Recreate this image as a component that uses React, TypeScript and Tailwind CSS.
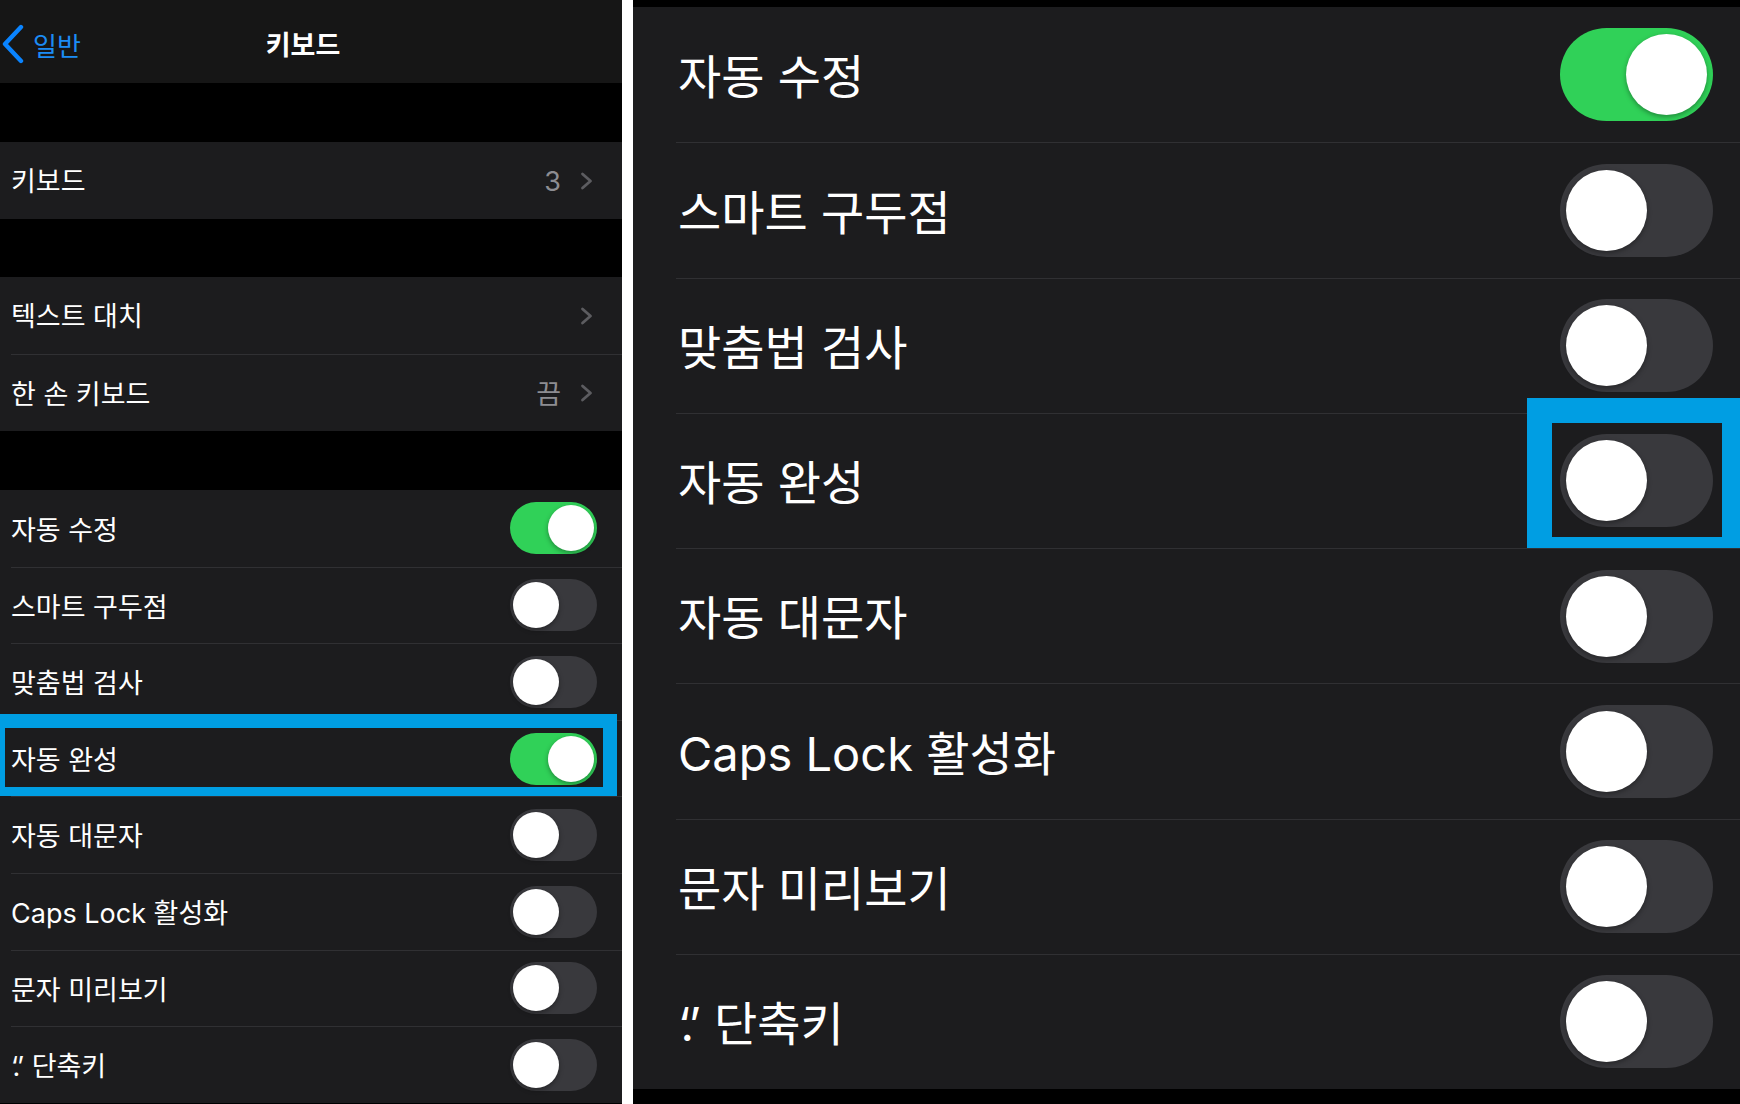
import React from 'react';

const font = { fontFamily: 'Inter, "Noto Sans CJK KR", "Noto Sans", sans-serif' };

interface ToggleProps {
  on: boolean;
  big?: boolean;
}

function Toggle({ on, big }: ToggleProps) {
  const track = big ? 'w-[153px] h-[93px] p-[6px]' : 'w-[87px] h-[52px] p-[3px]';
  const knob = big ? 'w-[81px] h-[81px]' : 'w-[46px] h-[46px]';
  return (
    <div
      className={`${track} rounded-full flex items-center shrink-0 ${
        on ? 'bg-[#30d158] justify-end' : 'bg-[#39393d] justify-start'
      }`}
    >
      <div className={`${knob} rounded-full bg-white shadow-[0_2px_5px_rgba(0,0,0,0.35)]`} />
    </div>
  );
}

function Chevron() {
  return (
    <svg width="13" height="18" viewBox="0 0 13 18" className="shrink-0">
      <path d="M2.5 2l8 7-8 7" fill="none" stroke="#5c5c60" strokeWidth="2.8" strokeLinecap="round" strokeLinejoin="round" />
    </svg>
  );
}

const toggles: { label: React.ReactNode; on: boolean; key: string }[] = [
  { key: 'a', label: '자동 수정', on: true },
  { key: 'b', label: '스마트 구두점', on: false },
  { key: 'c', label: '맞춤법 검사', on: false },
  { key: 'd', label: '자동 완성', on: true },
  { key: 'e', label: '자동 대문자', on: false },
  { key: 'f', label: 'Caps Lock 활성화', on: false },
  { key: 'g', label: '문자 미리보기', on: false },
  {
    key: 'h',
    label: (
      <>
        <span className="tracking-[-0.12em]">‘.</span>’ 단축키
      </>
    ),
    on: false,
  },
];

function LinkRow({ label, value, first }: { label: string; value?: string; first?: boolean }) {
  return (
    <div className="h-[77px] bg-[#1c1c1e] flex flex-col">
      {!first && <div className="h-px bg-[#303033] ml-[11px]" />}
      <div className="flex-1 flex items-center pl-[11px] pr-[29px]">
        <span className="flex-1 pt-[4px] text-[27px] text-white">{label}</span>
        {value && <span className="pt-[4px] text-[27px] text-[#8d8d92] mr-[19px]">{value}</span>}
        <Chevron />
      </div>
    </div>
  );
}

function LeftPanel() {
  return (
    <div className="w-[622px] shrink-0 flex flex-col bg-black">
      {/* nav bar */}
      <div className="h-[83px] bg-[#161616] grid grid-cols-[1fr_auto_1fr] items-center pr-4 pt-[9px]">
        <div className="flex items-center gap-[8px] pl-[1px]">
          <svg width="24" height="40" viewBox="0 0 24 40" className="-mt-[4px]">
            <path d="M20 3L4 20l16 17" fill="none" stroke="#0a84ff" strokeWidth="4.4" strokeLinecap="round" strokeLinejoin="round" />
          </svg>
          <span className="text-[26px] text-[#1c8cf5]">일반</span>
        </div>
        <span className="text-[27px] font-semibold text-white">키보드</span>
        <div />
      </div>

      <div className="h-[59px]" />
      <LinkRow label="키보드" value="3" first />
      <div className="h-[58px]" />
      <LinkRow label="텍스트 대치" first />
      <LinkRow label="한 손 키보드" value="끔" />
      <div className="h-[59px]" />

      {toggles.map((t, i) => (
        <div key={t.key} className="relative h-[76.6px] bg-[#1c1c1e] flex flex-col shrink-0">
          {i > 0 && <div className="h-px bg-[#303033] ml-[11px]" />}
          <div className="flex-1 flex items-center pl-[11px] pr-[25px]">
            <span className="flex-1 pt-[5px] text-[27px] text-white">{t.label}</span>
            <Toggle on={t.on} />
          </div>
          {t.key === 'd' && (
            <div className="absolute left-0 right-[5px] -top-[6px] h-[87px] border-[14px] border-l-[5px] border-[#009ee3]" />
          )}
        </div>
      ))}
    </div>
  );
}

function RightPanel() {
  const rows = toggles.map((t) => ({ ...t, on: t.key === 'a' }));
  return (
    <div className="flex-1 flex flex-col bg-black pt-[7px]">
      {rows.map((t, i) => (
        <div key={t.key} className="relative h-[135.25px] bg-[#1c1c1e] flex flex-col shrink-0">
          {i > 0 && <div className="h-px bg-[#303033] ml-[43px]" />}
          <div className="flex-1 flex items-center pl-[45px] pr-[27px]">
            <span className="flex-1 pt-[5px] text-[47px] text-white">{t.label}</span>
            <Toggle on={t.on} big />
          </div>
          {t.key === 'd' && (
            <div className="absolute right-0 w-[213px] -top-[15px] h-[164px] border-[25px] border-r-[18px] border-[#009ee3]" />
          )}
        </div>
      ))}
    </div>
  );
}

export default function App() {
  return (
    <div className="w-[1740px] h-[1104px] overflow-hidden flex bg-black" style={font}>
      <LeftPanel />
      <div className="w-[11px] shrink-0 bg-white" />
      <RightPanel />
    </div>
  );
}
